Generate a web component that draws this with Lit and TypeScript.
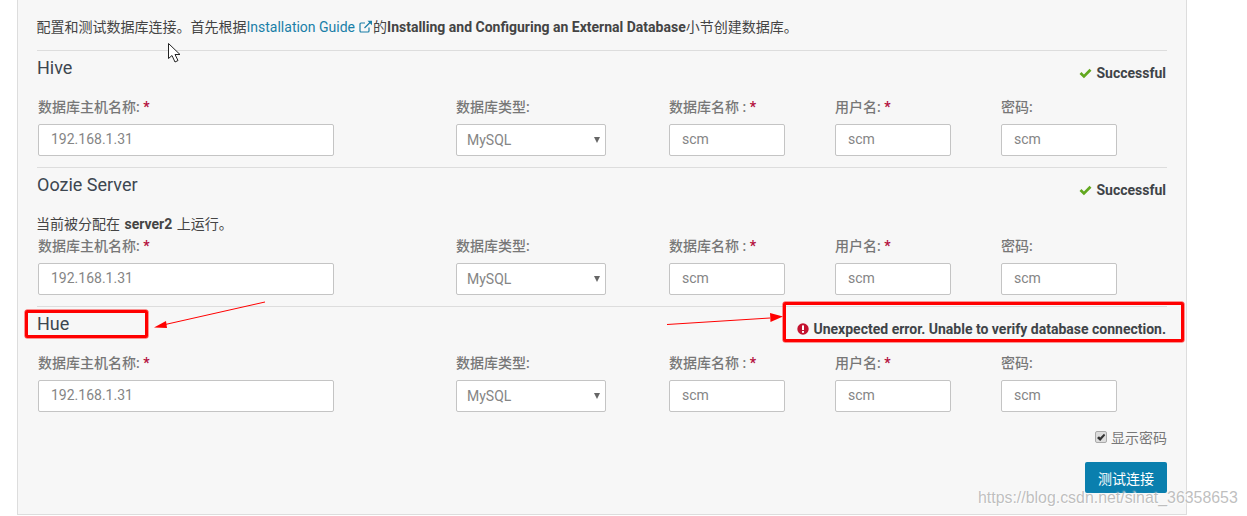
import { LitElement, html, css } from "lit";
import { customElement } from "lit/decorators.js";

const CHECK = html`<svg class="check" viewBox="0 0 14 12" width="13" height="11"><path d="M.5 6.500 2.600 4.300 5.300 7 11.400 .8 13.500 3 5.300 11.200Z" fill="#62a81f"/></svg>`;

@customElement("app-root")
export class AppRoot extends LitElement {
  static styles = css`
    :host { display: block; position: relative; width: 1247px; height: 516px; overflow: hidden; background: #fff;
      font-family: Roboto, "Noto Sans CJK SC", sans-serif; font-size: 14px; color: #333; }
    .panel { box-sizing: border-box; margin-left: 17px; width: 1170px; height: 515px; background: #f7f7f7;
      border: 1px solid #ddd; border-top: 0; padding: 17px 19px 0 19px; }
    .intro { line-height: 20px; height: 20px; margin: 0 0 13px -0.5px; color: #444; white-space: nowrap; }
    .intro a { color: #1a7fa8; text-decoration: none; }
    .intro b { font-weight: 700; color: #444; }
    .ext { vertical-align: -1px; margin-left: 4px; }
    .section { border-top: 1px solid #ddd; padding-bottom: 11px; }
    .head { display: flex; justify-content: space-between; align-items: flex-start; height: 46px; }
    .title { font-size: 18px; line-height: 26px; margin: 4px 0 0 0; color: #3d4650; }
    .status { display: flex; align-items: center; gap: 4px; margin: 12px 1px 0 0; line-height: 20px; font-weight: 700; color: #3f4448; font-size: 14px; }
    .note { height: 22px; line-height: 22px; color: #444; margin-top: -1px; margin-bottom: 1px; margin-left: -1px; }
    .note b { font-weight: 700; margin: 0 1px; }
    .fields { display: grid; grid-template-columns: 418px 213px 166px 166px 116px; margin-left: 1px; }
    label { display: block; height: 27px; line-height: 20px; font-weight: 500; color: #777; white-space: nowrap; }
    .req { color: #b5123f; font-weight: 700; }
    input[type="text"], select { display: block; box-sizing: border-box; height: 32px; border: 1px solid #c4c4c4; border-radius: 2px;
      background: #fff; font: inherit; color: #858585; padding: 0 0 2px 12px; outline: 0; margin: 0; }
    .host { width: 296px; }
    .small { width: 116px; }
    .selwrap { position: relative; width: 150px; }
    select { width: 150px; appearance: none; -webkit-appearance: none; padding: 0 0 0 10px; }
    .selwrap::after { content: ""; position: absolute; right: 6px; top: 13px; border: 3.500px solid transparent; border-top: 6px solid #666; border-bottom: 0; }
    .showpw { display: flex; justify-content: flex-end; align-items: center; gap: 4px; height: 20px; margin: 15px 0 15px; color: #777; }
    .box { box-sizing: border-box; width: 12px; height: 12px; border: 1px solid #aaa; border-radius: 2px; background: #ddd; display: flex; align-items: center; justify-content: center; }
    .actions { display: flex; justify-content: flex-end; }
    button { width: 82px; height: 31px; border: 0; border-radius: 2px; background: #0a7fae; color: #fff; font: inherit; padding: 0; }
    .mark { position: absolute; box-sizing: border-box; border: 3px solid #f00; border-radius: 2px; box-shadow: 0 0 0 .5px rgba(255,0,0,.8); pointer-events: none; }
    .mark.hue { left: 25px; top: 310px; width: 123px; height: 28px; }
    .mark.err { left: 783px; top: 302px; width: 401px; height: 40px; }
    .overlay { position: absolute; left: 0; top: 0; pointer-events: none; }
    .wm { position: absolute; left: 978px; top: 488px; font-family: "Liberation Sans", sans-serif; font-size: 15.900px; line-height: 20px; color: rgba(170,170,170,.75); text-shadow: 0 0 2px #fff, 1px 1px 1px rgba(255,255,255,.8); white-space: nowrap; }
  `;

  private fields() {
    const small = (name: string, req: boolean) => html`<div>
      <label>${name}${req ? html` <span class="req">*</span>` : ""}</label>
      <input type="text" class="small" .value=${"scm"} />
    </div>`;
    return html`<div class="fields">
      <div><label>数据库主机名称: <span class="req">*</span></label><input type="text" class="host" .value=${"192.168.1.31"} /></div>
      <div><label>数据库类型:</label><div class="selwrap"><select><option>MySQL</option></select></div></div>
      ${small("数据库名称 :", true)}
      ${small("用户名:", true)}
      ${small("密码:", false)}
    </div>`;
  }

  render() {
    return html`
      <div class="panel">
        <p class="intro">配置和测试数据库连接。首先根据<a>Installation Guide<svg class="ext" width="14" height="13" viewBox="0 0 14 13" fill="none" stroke="#1a7fa8" stroke-width="1.2"><path d="M10 7.500V11a1 1 0 0 1-1 1H2a1 1 0 0 1-1-1V4a1 1 0 0 1 1-1h4"/><path d="M5.500 8 12 1.500"/><path d="M8.500 .8H13V5.200" fill="#1a7fa8" stroke="none"/></svg></a>的<b>Installing and Configuring an External Database</b>小节创建数据库。</p>

        <div class="section">
          <div class="head"><div class="title">Hive</div><div class="status">${CHECK}Successful</div></div>
          ${this.fields()}
        </div>
        <div class="section">
          <div class="head"><div class="title">Oozie Server</div><div class="status">${CHECK}Successful</div></div>
          <div class="note">当前被分配在 <b>server2</b> 上运行。</div>
          ${this.fields()}
        </div>
        <div class="section" style="padding-bottom:0">
          <div class="head"><div class="title">Hue</div>
            <div class="status"><svg width="12" height="12" viewBox="0 0 12 12"><circle cx="6" cy="6" r="5.700" fill="#c4122f"/><rect x="5" y="2.400" width="2" height="4.600" fill="#fff"/><rect x="5" y="8" width="2" height="1.800" fill="#fff"/></svg>Unexpected error. Unable to verify database connection.</div>
          </div>
          ${this.fields()}
        </div>
        <div class="showpw"><span class="box"><svg width="10" height="9" viewBox="0 0 10 9"><path d="M1 5 3 3.200 4.200 4.600 8 .8 9.200 2.200 4.200 8Z" fill="#333"/></svg></span>显示密码</div>
        <div class="actions"><button>测试连接</button></div>
      </div>

      <div class="mark hue"></div>
      <div class="mark err"></div>
      <svg class="overlay" width="1247" height="516">
        <path d="M265 302 163 325" stroke="#f00" stroke-width="1"/>
        <path d="M154 327.500 166 321 167 328Z" fill="#f00"/>
        <path d="M667 324.500 770 318" stroke="#f00" stroke-width="1"/>
        <path d="M783 316.500 770 313 770.500 322Z" fill="#f00"/>
        <path d="M168.500 43.500V58.500L172 55.500 175 62 178 60.500 175 54.500H180Z" fill="#fff" stroke="#222" stroke-width="1"/>
      </svg>
      <div class="wm">https://blog.csdn.net/sinat_36358653</div>
    `;
  }
}
